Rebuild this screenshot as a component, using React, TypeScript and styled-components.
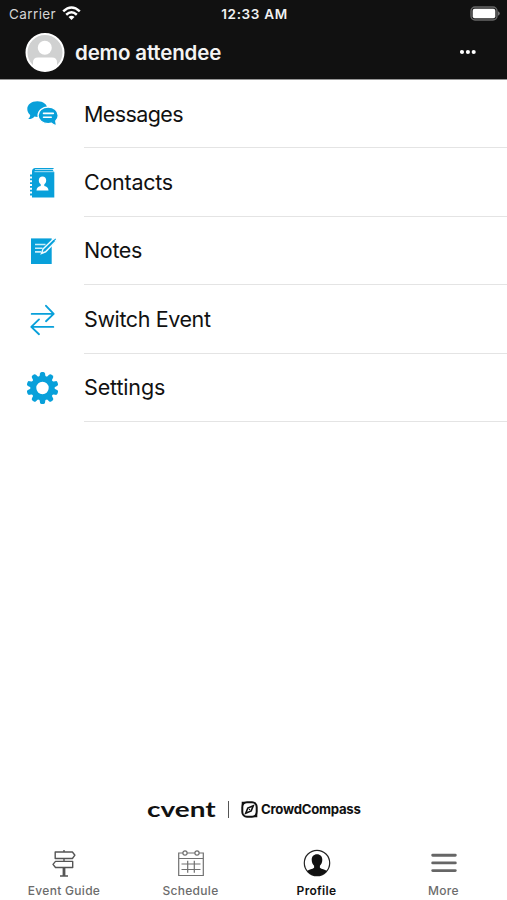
import React from "react";
import styled, { createGlobalStyle } from "styled-components";

const BLUE = "#08a0da";
const GREY = "#6c6c6c";

const GlobalStyle = createGlobalStyle`
  * { box-sizing: border-box; }
  body { margin: 0; background: #fff; font-family: Inter, "Liberation Sans", sans-serif; }
`;

const Screen = styled.div`
  width: 507px;
  height: 900px;
  display: flex;
  flex-direction: column;
  background: #fff;
  overflow: hidden;
`;

const TopArea = styled.header`
  height: 80px;
  flex: none;
  background: #111;
  border-bottom: 1px solid #969696;
  color: #fff;
`;

const StatusBar = styled.div`
  height: 28px;
  display: grid;
  grid-template-columns: 1fr auto 1fr;
  align-items: center;
  padding: 0 7px 1px 9px;
`;

const Carrier = styled.div`
  display: flex;
  align-items: center;
  gap: 6px;
  color: #d4d4d4;
  font-size: 13.5px;
  letter-spacing: 0.4px;
`;

const Clock = styled.div`
  font-size: 13.5px;
  font-weight: 600;
  letter-spacing: 0.65px;
  color: #f1f1f1;
`;

const BatterySlot = styled.div`
  display: flex;
  justify-content: flex-end;
`;

const ProfileBar = styled.div`
  height: 49px;
  display: flex;
  align-items: center;
  padding: 0 30px 0 25px;
`;

const UserName = styled.h1`
  margin: 0 0 0 10px;
  flex: 1;
  font-size: 20.5px;
  font-weight: 600;
  letter-spacing: -0.15px;
  color: #f4f4f4;
`;

const MoreButton = styled.button`
  border: 0;
  padding: 0 0 2px;
  background: none;
  display: flex;
`;

const Menu = styled.nav`
  flex: 1;
`;

const MenuRow = styled.div`
  height: 68.4px;
  display: flex;
  align-items: stretch;
  padding-left: 24px;
`;

const IconSlot = styled.div`
  width: 60px;
  display: flex;
  align-items: center;
`;

const MenuLabel = styled.div<{ $tracking: number }>`
  flex: 1;
  display: flex;
  align-items: center;
  border-bottom: 1px solid #e4e4e4;
  font-size: 21.5px;
  letter-spacing: ${(p) => p.$tracking}px;
  color: #111;
`;

const Brands = styled.div`
  height: 30px;
  margin-bottom: 20px;
  padding-left: 147px;
  display: flex;
  align-items: center;
  color: #111;
`;

const CventMark = styled.div`
  width: 70px;
  font-family: Lato, sans-serif;
  font-weight: 700;
  font-size: 21px;
  line-height: 24px;
  padding-bottom: 1px;
  white-space: nowrap;
  transform: scaleX(1.33);
  transform-origin: 0 50%;
`;

const Separator = styled.div`
  width: 1px;
  height: 17px;
  margin: 0 12px 0 11px;
  background: #555;
`;

const CrowdMark = styled.div`
  display: flex;
  align-items: center;
  gap: 3px;
  font-size: 13.2px;
  font-weight: 700;
  letter-spacing: -0.27px;
`;

const TabBar = styled.nav`
  height: 56px;
  display: grid;
  grid-template-columns: 128px 125px 127px 127px;
`;

const Tab = styled.div<{ $active?: boolean }>`
  display: flex;
  flex-direction: column;
  align-items: center;
  padding-top: 3px;
  color: ${(p) => (p.$active ? "#111" : GREY)};
  font-size: 12px;
  line-height: 16px;
  font-weight: ${(p) => (p.$active ? 600 : 500)};
  letter-spacing: 0.3px;
`;

const TabIcon = styled.div`
  height: 31px;
  display: flex;
  align-items: center;
  margin-bottom: 5px;
`;

const Wifi = () => (
  <svg width="19" height="15" viewBox="0 0 19 15" fill="none" stroke="#fff" strokeWidth="2.5">
    <path d="M1.2 5.3Q9.5-2.4 17.8 5.3M4.2 8.7Q9.5 3.9 14.8 8.7" />
    <path d="M6.5 11Q9.5 8.6 12.5 11L9.5 14Z" fill="#fff" stroke="none" />
  </svg>
);

const Battery = () => (
  <svg width="30" height="15" viewBox="0 0 30 15">
    <rect x="1" y="1" width="26" height="13" rx="4" fill="#222" stroke="#666" strokeWidth="1.4" />
    <rect x="2.700" y="2.800" width="22.600" height="9.400" rx="2" fill="#fff" />
    <path d="M28 5.200q1.800.8 1.800 2.300T28 9.800z" fill="#777" />
  </svg>
);

const Avatar = () => (
  <svg width="40" height="40" viewBox="0 0 40 40">
    <circle cx="20" cy="19.500" r="18.500" fill="#d0d1d1" />
    <circle cx="19.800" cy="14.800" r="7" fill="#fff" />
    <path d="M8 32.500v-3q0-5 5-5h14q5 0 5 5v3q-5 5-12 5t-12-5z" fill="#fff" />
    <circle cx="20" cy="19.500" r="18.500" fill="none" stroke="#fff" strokeWidth="2" />
  </svg>
);

const Dots = () => (
  <svg width="17" height="6" viewBox="0 0 17 6" fill="#fff">
    <circle cx="2" cy="3" r="2.050" />
    <circle cx="7.900" cy="3" r="2.050" />
    <circle cx="13.700" cy="3" r="2.050" />
  </svg>
);

const MessagesIcon = () => (
  <svg width="37" height="36" viewBox="0 0 36 35">
    <path d="M13 5.200c5.800 0 9.800 3.200 9.800 7.500s-4 7.600-9.800 7.600c-1 0-2-.1-2.800-.4-1.600 1.900-4 2.700-6.200 2.500 1.300-1 2-2.400 2-4-1.800-1.400-2.800-3.500-2.800-5.700 0-4.300 4-7.500 9.800-7.500z" fill={BLUE} />
    <path d="M23.500 10.700c5.600 0 9.800 3.500 9.800 8.200 0 2.200-.9 4.100-2.400 5.500-.1 2 .7 3.300 1.800 4.200-2.400.3-4.400-.5-6-2.100-1 .3-2.100.4-3.200.4-5.600 0-9.800-3.400-9.800-8s4.200-8.200 9.800-8.200z" fill={BLUE} stroke="#fff" strokeWidth="1.300" />
    <path d="M19 16.900h9.500M19 20.600h7.500" stroke="#fff" strokeWidth="1.500" strokeLinecap="round" />
  </svg>
);

const ContactsIcon = () => (
  <svg width="36" height="36" viewBox="0 0 36 36">
    <path d="M8 6.500Q8 3 11.500 3H30l-1.500 1.800L30.300 7v25.500H8z" fill={BLUE} />
    <path d="M11 4.500h18M10.500 6.700h19.500" stroke="#d8f1fb" strokeWidth=".8" />
    <path d="M6 10.500h3M6 14.300h3M6 18.100h3M6 21.900h3M6 25.700h3M6 29.500h3" stroke={BLUE} strokeWidth="1.800" />
    <path d="M18.500 11.500c2.200 0 3.700 1.500 3.700 3.700 0 1.700-.7 3.300-1.900 4.100v1.600c2.500.6 4.200 1.600 4.200 4.600h-12c0-3 1.700-4 4.200-4.600v-1.600c-1.200-.8-1.900-2.400-1.900-4.100 0-2.200 1.500-3.700 3.700-3.700z" fill="#fff" />
  </svg>
);

const NotesIcon = () => (
  <svg width="36" height="36" viewBox="0 0 36 36">
    <path d="M7 5.400h20.700V31H7z" fill={BLUE} />
    <path d="M11 11.500h10.500M11 15.200h7.500M11 18.900h6" stroke="#c9edfa" strokeWidth="1.600" />
    <path d="M17.500 20.500l1.600-4.600L29.700 5.700l2.400 2.400-10.500 10.700z" fill={BLUE} stroke="#eefaff" strokeWidth="1.500" />
    <path d="M19.500 17.700L31.700 5.800" stroke={BLUE} strokeWidth="1.100" />
  </svg>
);

const SwitchIcon = () => (
  <svg width="36" height="36" viewBox="0 0 36 36" fill="none" stroke={BLUE} strokeWidth="1.900" strokeLinecap="round" strokeLinejoin="round">
    <path d="M7.700 12.900h21.700M22 4.800l7.700 8.100-7.700 7.300M29.300 25.900H7.500M15 18.400l-7.700 7.500 7.700 7.300" />
  </svg>
);

const GearIcon = () => (
  <svg width="37" height="36" viewBox="0 0 37 36">
    {Array.from({ length: 10 }, (_, i) => (
      <path key={i} d="M15.200 8l.8-4.500q.3-1.500 1.600-1.500h1.800q1.300 0 1.600 1.500l.8 4.500z" fill={BLUE} transform={`rotate(${i * 36} 18.500 18)`} />
    ))}
    <circle cx="18.500" cy="18" r="9.200" fill="none" stroke={BLUE} strokeWidth="6" />
  </svg>
);

const CompassIcon = () => (
  <svg width="17" height="17" viewBox="0 0 17 17" fill="none" stroke="#111">
    <rect x="1.300" y="1.300" width="14.400" height="14.400" rx="4.600" strokeWidth="2" />
    <path d="M1.500 4.500v-3h3M12.500 15.500h3v-3" strokeWidth="1.600" />
    <path d="M12.300 4.700L10.200 9.900 4.700 12.300 6.800 7.100z" strokeWidth="1.600" />
    <circle cx="8.500" cy="8.500" r=".7" fill="#111" stroke="none" />
  </svg>
);

const SignIcon = () => (
  <svg width="26" height="30" viewBox="0 0 26 30" fill="none" stroke="#555" strokeWidth="1.400" strokeLinejoin="round">
    <path d="M13 2v2M13 10.500v3M12.300 19.500v8M13.700 19.500v8M9 28h8" />
    <path d="M4.200 4h17.200l2.500 3.200-2.500 3.300H4.200zM21.700 13.400H4.500L2 16.400l2.500 3.100h17.200z" />
  </svg>
);

const CalendarIcon = () => (
  <svg width="28" height="30" viewBox="0 0 28 30" fill="none" stroke="#707070" strokeWidth="1.200">
    <path d="M6 5H1.700v22.500h24.600V5H22M10 5h8M1.700 10.500h24.600" />
    <circle cx="8" cy="5" r="2.100" />
    <circle cx="20" cy="5" r="2.100" />
    <path d="M4.500 16h19M4.500 21.500h19M10.700 12.800v12M17.300 12.800v12" />
  </svg>
);

const ProfileIcon = () => (
  <svg width="28" height="28" viewBox="0 0 28 28">
    <circle cx="14" cy="14" r="12.700" fill="#fff" stroke="#222" strokeWidth="1.200" />
    <path d="M14 5.200c3.300 0 5.300 2.300 5.300 5.500 0 2.400-.9 4.700-2.400 6v2.100c1.800 1.600 4.900 1.500 7 3.100-2.300 3-5.900 4.800-9.900 4.800s-7.600-1.800-9.900-4.800c2.100-1.600 5.200-1.500 7-3.100v-2.100c-1.500-1.300-2.400-3.600-2.400-6 0-3.200 2-5.500 5.300-5.500z" fill="#111" />
  </svg>
);

const MoreIcon = () => (
  <svg width="28" height="22" viewBox="0 0 28 22" stroke="#666" strokeWidth="2.900" strokeLinecap="round">
    <path d="M2.700 3.200h22.600M2.700 10.900h22.600M2.700 18.600h22.600" />
  </svg>
);

const menuItems = [
  { label: "Messages", Icon: MessagesIcon, tracking: -0.6 },
  { label: "Contacts", Icon: ContactsIcon, tracking: -0.25 },
  { label: "Notes", Icon: NotesIcon, tracking: -0.35 },
  { label: "Switch Event", Icon: SwitchIcon, tracking: -0.4 },
  { label: "Settings", Icon: GearIcon, tracking: -0.15 },
];

const tabs = [
  { label: "Event Guide", Icon: SignIcon },
  { label: "Schedule", Icon: CalendarIcon },
  { label: "Profile", Icon: ProfileIcon, active: true },
  { label: "More", Icon: MoreIcon },
];

export default function App() {
  return (
    <>
      <GlobalStyle />
      <Screen>
        <TopArea>
          <StatusBar>
            <Carrier>Carrier <Wifi /></Carrier>
            <Clock>12:33 AM</Clock>
            <BatterySlot><Battery /></BatterySlot>
          </StatusBar>
          <ProfileBar>
            <Avatar />
            <UserName>demo attendee</UserName>
            <MoreButton aria-label="Options"><Dots /></MoreButton>
          </ProfileBar>
        </TopArea>
        <Menu>
          {menuItems.map(({ label, Icon, tracking }) => (
            <MenuRow key={label}>
              <IconSlot><Icon /></IconSlot>
              <MenuLabel $tracking={tracking}>{label}</MenuLabel>
            </MenuRow>
          ))}
        </Menu>
        <Brands>
          <CventMark>cvent</CventMark>
          <Separator />
          <CrowdMark><CompassIcon />CrowdCompass</CrowdMark>
        </Brands>
        <TabBar>
          {tabs.map(({ label, Icon, active }) => (
            <Tab key={label} $active={active}>
              <TabIcon><Icon /></TabIcon>
              {label}
            </Tab>
          ))}
        </TabBar>
      </Screen>
    </>
  );
}
